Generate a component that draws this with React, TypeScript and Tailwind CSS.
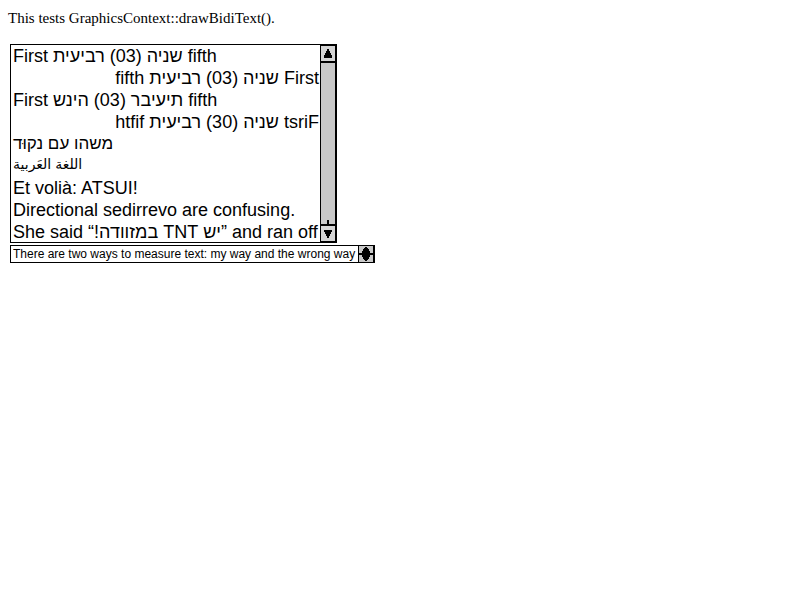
const quoted = "She said \u201C\u202Bיש TNT במזוודה!\u202C\u201D and ran off";

const mixed = "First שניה (03) רביעית fifth";

const lines: { text: string; dir: "ltr" | "rtl"; className: string }[] = [
  { text: mixed, dir: "ltr", className: "text-lg [unicode-bidi:embed]" },
  { text: mixed, dir: "rtl", className: "text-lg [unicode-bidi:embed]" },
  { text: mixed, dir: "ltr", className: "text-lg [unicode-bidi:bidi-override]" },
  { text: mixed, dir: "rtl", className: "text-lg [unicode-bidi:bidi-override]" },
  { text: "משהו עם נקוּד", dir: "ltr", className: "text-[17px]" },
  { text: "اللغة العَربية", dir: "ltr", className: "text-[14px]" },
  { text: "Et volià: ATSUI!", dir: "ltr", className: "text-lg" },
  { text: "Directional sedirrevo are confusing.", dir: "ltr", className: "text-lg" },
  { text: quoted, dir: "ltr", className: "text-lg" },
];

function ScrollBar() {
  return (
    <div className="flex w-[17px] flex-col border-r-2 border-l border-black bg-[#c8c8c8]">
      <button
        type="button"
        aria-label="Scroll up"
        className="flex h-[18px] items-center justify-center border-t border-b-2 border-black bg-[#d4d4d4]"
      >
        <svg width="10" height="10" viewBox="0 0 10 10" shapeRendering="crispEdges">
          <path d="M4 0h2v2h1v2h1v2h1v3H1V6h1V4h1V2h1z" />
        </svg>
      </button>
      <div className="flex flex-1 items-end justify-center">
        <div className="h-1 w-[2px] bg-black" />
      </div>
      <button
        type="button"
        aria-label="Scroll down"
        className="flex h-[18px] items-center justify-center border-t-2 border-b border-black bg-[#d4d4d4]"
      >
        <svg width="10" height="10" viewBox="0 0 10 10" shapeRendering="crispEdges">
          <path d="M1 1h8v2H8v2H7v2H6v2H4V7H3V5H2V3H1z" />
        </svg>
      </button>
    </div>
  );
}

export default function App() {
  return (
    <main className="min-h-screen bg-white p-2 text-black">
      <p className="font-['Liberation_Serif',serif] text-[15px] leading-5">
        This tests GraphicsContext::drawBidiText().
      </p>
      <div className="mx-[2px] mt-4 flex h-[199px] w-[327px] border border-r-0 border-black">
        <select
          size={9}
          aria-label="Bidirectional text samples"
          className="min-w-0 flex-1 appearance-none overflow-hidden bg-white font-['Liberation_Sans','DejaVu_Sans',sans-serif] text-lg outline-none"
        >
          {lines.map((line, i) => (
            <option
              key={i}
              dir={line.dir}
              className={`h-[22px] min-h-0 pt-px pb-0 pl-[2px] ltr:pr-0 rtl:pr-px ${line.className}`}
            >
              {line.text}
            </option>
          ))}
        </select>
        <ScrollBar />
      </div>
      <div className="mx-[2px] mt-[2px] flex h-[18px] w-[365px] border border-r-2 border-black">
        <select
          aria-label="Measuring text"
          className="min-w-0 flex-1 appearance-none bg-white px-[2px] font-['Liberation_Sans',sans-serif] text-xs leading-4 outline-none"
        >
          <option>There are two ways to measure text: my way and the wrong way</option>
        </select>
        <span className="flex w-[15px] items-center justify-center border-l border-black bg-[#c8c8c8]">
          <svg width="14" height="16" viewBox="0 0 14 16" shapeRendering="crispEdges">
            <path d="M6 1h2v1h1v1h1v2h1v2h3v2h-3v2h-1v2H9v1H8v1H6v-1H5v-1H4v-2H3V9H0V7h3V5h1V3h1V2h1z" />
          </svg>
        </span>
      </div>
    </main>
  );
}
